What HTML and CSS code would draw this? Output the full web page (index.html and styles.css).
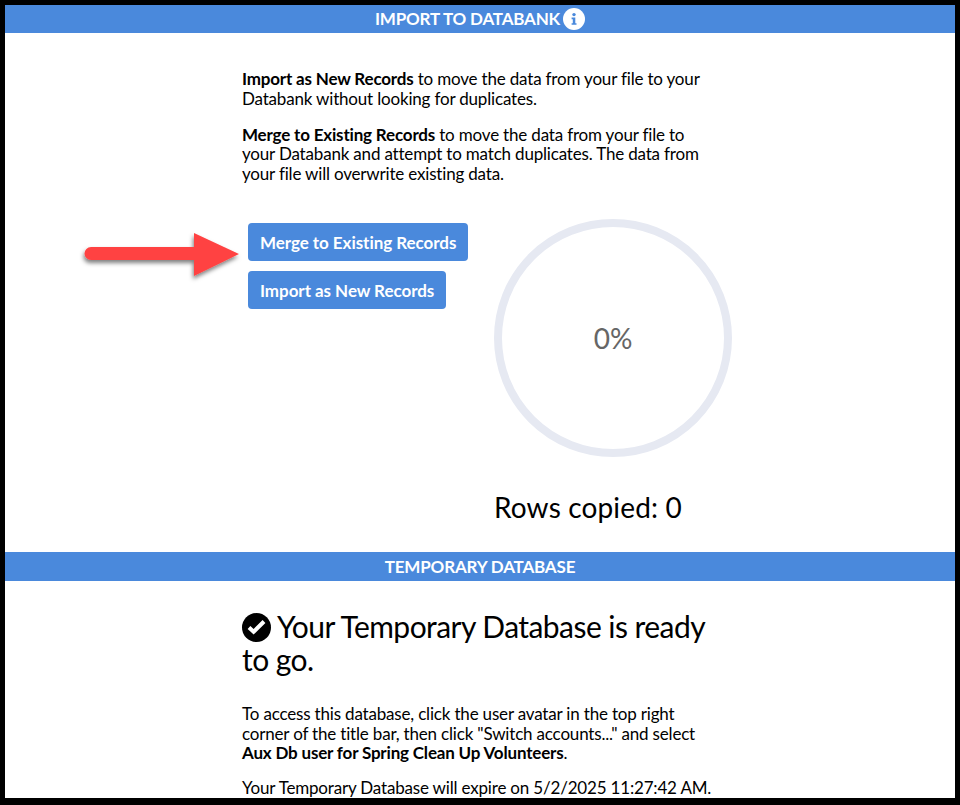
FILE: index.html
```html
<!DOCTYPE html>
<html lang="en">
<head>
    <meta charset="UTF-8">
    <meta name="viewport" content="width=device-width, initial-scale=1.0">
    <title>Import to Databank</title>
    <link rel="stylesheet" href="styles.css">
</head>
<body>
    <div class="frame">
        <h2 class="section-bar">
            IMPORT TO DATABANK
            <svg class="info-icon" viewBox="0 0 22 22" width="22" height="22" aria-hidden="true">
                <circle cx="11" cy="11" r="11" fill="#fff"/>
                <circle cx="11" cy="6.6" r="1.7" fill="#4a89dc"/>
                <path d="M8.6 9.6h3.7v5.6h1.2v1.6H8.6v-1.6h1.2v-4H8.6z" fill="#4a89dc"/>
            </svg>
        </h2>

        <div class="import-section">
            <div class="column">
                <p class="intro"><strong>Import as New Records</strong> to move the data from your file to your Databank without looking for duplicates.</p>
                <p class="intro"><strong>Merge to Existing Records</strong> to move the data from your file to your Databank and attempt to match duplicates. The data from your file will overwrite existing data.</p>
            </div>

            <div class="import-row">
                <div class="button-list">
                    <button type="button" class="action-btn">Merge to Existing Records</button>
                    <button type="button" class="action-btn">Import as New Records</button>
                </div>
                <div class="progress">
                    <div class="gauge">0%</div>
                    <div class="rows-copied">Rows copied: 0</div>
                </div>
            </div>

            <svg class="arrow" viewBox="0 0 180 70" width="180" height="70" aria-hidden="true">
                <defs>
                    <filter id="arrowShadow" x="-10%" y="-20%" width="120%" height="150%">
                        <feDropShadow dx="-1" dy="3" stdDeviation="2" flood-color="#000" flood-opacity="0.5"/>
                    </filter>
                </defs>
                <path d="M16 19H119V5L164 26L119 48V32H16a6.5 6.5 0 0 1 0-13z" fill="#ff4343" filter="url(#arrowShadow)"/>
            </svg>
        </div>

        <h2 class="section-bar section-bar-tall">TEMPORARY DATABASE</h2>

        <div class="temp-section">
            <div class="column">
                <h1 class="ready-title">
                    <svg class="check-icon" viewBox="0 0 29 29" width="29" height="29" aria-hidden="true">
                        <circle cx="14.5" cy="14.5" r="14.5" fill="#000"/>
                        <path d="M7 14.5l4.6 4.3L22 8.5" fill="none" stroke="#fff" stroke-width="4"/>
                    </svg>
                    Your Temporary Database is ready to go.
                </h1>
                <p class="note">To access this database, click the user avatar in the top right corner of the title bar, then click "Switch accounts..." and select <strong>Aux Db user for Spring Clean Up Volunteers</strong>.</p>
                <p class="note">Your Temporary Database will expire on 5/2/2025 11:27:42 AM.</p>
            </div>
        </div>
    </div>
</body>
</html>
```

FILE: styles.css
```css
html, body {
    height: 100%;
}

body {
    margin: 0;
    font-family: Lato, "Open Sans", sans-serif;
    font-size: 17px;
    line-height: 19.5px;
    letter-spacing: -0.18px;
    color: #000;
    background-color: #000;
    overflow: hidden;
}

.frame {
    box-sizing: border-box;
    height: 100vh;
    border-style: solid;
    border-color: #000;
    border-width: 5px 5px 7px 5px;
    background-color: #fff;
    overflow: hidden;
}

.section-bar {
    display: flex;
    justify-content: center;
    align-items: center;
    gap: 3px;
    height: 28px;
    margin: 0;
    background-color: #4a89dc;
    color: #fff;
    font-size: 17px;
    font-weight: 700;
}

.section-bar-tall {
    height: 29px;
}

.info-icon {
    flex: none;
}

.import-section {
    position: relative;
    box-sizing: border-box;
    height: 519px;
    padding-top: 36px;
}

.column {
    width: 476px;
    margin-left: 237px;
}

.intro {
    margin: 0 0 16.5px;
}

.import-row {
    display: flex;
    margin-top: 35.5px;
    margin-left: 243px;
    gap: 26px;
}

.button-list {
    display: flex;
    flex-direction: column;
    align-items: flex-start;
    gap: 10px;
    width: 220px;
    padding-top: 4px;
}

.action-btn {
    height: 38px;
    padding: 1px 12px 0;
    border: none;
    border-radius: 4px;
    background-color: #4a89dc;
    color: #fff;
    font-family: inherit;
    font-size: 17px;
    font-weight: 700;
    letter-spacing: -0.05px;
    white-space: nowrap;
    cursor: pointer;
}

.gauge {
    display: flex;
    justify-content: center;
    align-items: center;
    box-sizing: border-box;
    width: 238px;
    height: 238px;
    padding-top: 2px;
    border: 8px solid #e6e9f2;
    border-radius: 50%;
    color: #666;
    font-size: 28px;
    letter-spacing: 0;
}

.rows-copied {
    margin-top: 33px;
    font-size: 28px;
    line-height: 34px;
    letter-spacing: 0.15px;
}

.arrow {
    position: absolute;
    left: 70px;
    top: 195px;
}

.temp-section {
    padding-top: 28.5px;
}

.ready-title {
    margin: 0 0 28.5px;
    font-size: 30px;
    font-weight: 400;
    line-height: 33px;
    letter-spacing: -0.55px;
}

.check-icon {
    vertical-align: -4px;
}

.note {
    margin: 0 0 15.5px;
}
```
